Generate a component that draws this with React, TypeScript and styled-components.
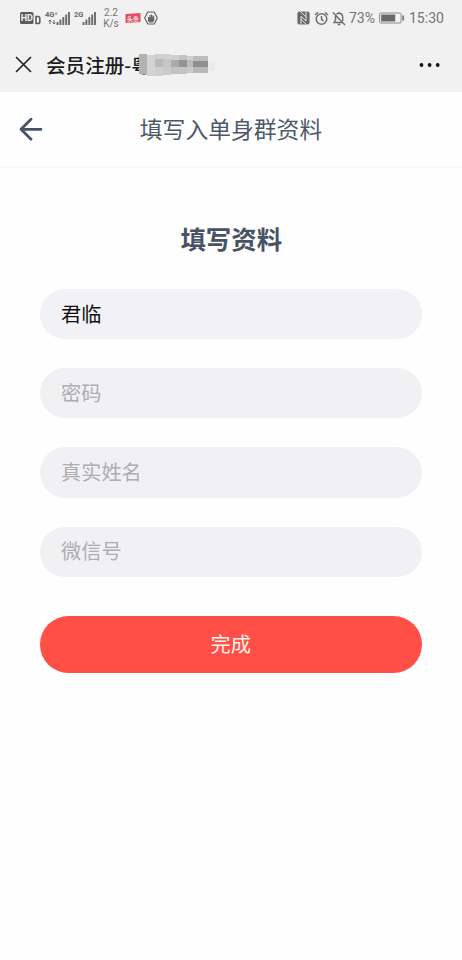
import React from 'react';
import styled, { createGlobalStyle } from 'styled-components';

const GlobalStyle = createGlobalStyle`
  * { box-sizing: border-box; }
  html, body { margin: 0; padding: 0; background: #fefefe; }
  body, input, button { font-family: "Noto Sans CJK SC", sans-serif; }
`;

const Page = styled.main`
  width: 462px;
  height: 960px;
  overflow: hidden;
  display: flex;
  flex-direction: column;
  background: #fefefe;
`;

const StatusBar = styled.div`
  height: 36px;
  flex: none;
  display: flex;
  align-items: center;
  justify-content: space-between;
  padding: 0 18px 0 20px;
  background: #f1f1f1;
  color: #747474;
  font-family: Roboto, sans-serif;
`;

const StatusGroup = styled.div`
  display: flex;
  align-items: center;
  height: 36px;
`;

const Icon = styled.svg<{ $gap?: number }>`
  display: block;
  flex: none;
  margin-left: ${(p) => p.$gap ?? 0}px;
`;

const Speed = styled.div`
  width: 16px;
  margin-left: 7px;
  font-size: 10px;
  line-height: 11px;
  text-align: center;
  white-space: nowrap;
`;

const StatusText = styled.span<{ $gap: number; $width: number }>`
  margin-left: ${(p) => p.$gap}px;
  width: ${(p) => p.$width}px;
  font-size: 14px;
  line-height: 20px;
  white-space: nowrap;
`;

const BrowserBar = styled.header`
  height: 56px;
  flex: none;
  display: flex;
  align-items: center;
  padding: 1px 21px 0 15px;
  background: #f1f1f1;
`;

const BrowserTitle = styled.div`
  display: flex;
  align-items: center;
  flex: 1;
  margin-left: 14px;
  padding-top: 1px;
  font-size: 19.6px;
  font-weight: 500;
  line-height: 28px;
  color: #1c1c1c;
  white-space: nowrap;
`;

const NavBar = styled.nav`
  height: 76px;
  flex: none;
  display: grid;
  grid-template-columns: 60px 1fr 60px;
  align-items: center;
  border-bottom: 2px solid #f6f6f7;
`;

const BackButton = styled.button`
  display: flex;
  padding: 0 0 0 18px;
  border: 0;
  background: none;
`;

const NavTitle = styled.h1`
  margin: 0;
  font-size: 22.8px;
  font-weight: 400;
  line-height: 34px;
  text-align: center;
  color: #4c5868;
`;

const Form = styled.form`
  display: flex;
  flex-direction: column;
  padding: 51px 40.5px 0 40px;
`;

const FormTitle = styled.h2`
  margin: 0 0 32px;
  padding-left: 1px;
  font-size: 25.4px;
  font-weight: 700;
  line-height: 38px;
  text-align: center;
  color: #475365;
`;

const Fields = styled.div`
  display: flex;
  flex-direction: column;
  gap: 29px;
`;

const Field = styled.input<{ $filled?: boolean }>`
  width: 100%;
  height: 50.2px;
  padding: 0 21px ${(p) => (p.$filled ? 1 : 2)}px;
  border: 0;
  border-radius: 26px;
  outline: 0;
  background: ${(p) => (p.$filled ? '#f1f1f6' : '#f1f1f4')};
  font-size: 20.2px;
  color: #111;
  &::placeholder { color: #adadb2; opacity: 1; }
`;

const Submit = styled.button`
  height: 56.5px;
  margin-top: 39.5px;
  padding: 0 0 2px;
  border: 0;
  border-radius: 29px;
  background: #ff4f47;
  color: #fff3e9;
  font-size: 20.2px;
`;

const HdIcon = () => (
  <Icon width="21" height="14" viewBox="0 0 21 14">
    <rect x="0" y="1" width="13.5" height="12" rx="1.5" fill="#5c5c5c" />
    <text x="6.8" y="10.3" textAnchor="middle" fontSize="9" fontWeight="700" fill="#f1f1f1">HD</text>
    <path d="M16 5.500h2q1.800 0 1.800 1.800v3.400q0 1.800-1.800 1.800h-2Z" fill="none" stroke="#5c5c5c" strokeWidth="1.600" />
  </Icon>
);

const Signal = ({ label, gap, arrows }: { label: string; gap: number; arrows?: boolean }) => (
  <Icon $gap={gap} width={arrows ? 25 : 22} height="16" viewBox={arrows ? '0 0 25 16' : '3 0 22 16'}>
    <text x={arrows ? 0 : 3} y="7" fontSize="7.5" fontWeight="700" fill="#6a6a6a">{label}</text>
    {arrows && <path d="M5 10v4M3.500 11.500 5 10l1.500 1.500M9 10v4M7.500 12.500 9 14l1.500-1.500" stroke="#6a6a6a" fill="none" />}
    <path d="M12.500 12v3M15.400 9.500v5.500M18.300 7v8M21.200 4.500v10.500M24 2v13" stroke="#6a6a6a" strokeWidth="1.900" />
  </Icon>
);

const NewsIcon = () => (
  <Icon $gap={6} width="16" height="12" viewBox="0 0 16 12">
    <path d="M.5 2 15.500 1v9L.5 11Z" fill="#e14e5a" />
    <text x="8" y="8.500" textAnchor="middle" fontSize="6" fontWeight="700" fill="#f9dfe1" fontFamily="Noto Sans CJK SC">头条</text>
  </Icon>
);

const HandIcon = () => (
  <Icon $gap={3} width="14" height="14" viewBox="0 0 14 14">
    <path d="M3.700 1h6.600L13.300 7l-3 6H3.700L.7 7Z" fill="none" stroke="#666" strokeWidth="1.200" strokeLinejoin="round" />
    <path d="M4.500 6V9q0 2 2.500 2t2.700-2V5.500M6 7V4M7.500 7V3.500M9 7V4.500" stroke="#666" strokeWidth="1.200" fill="none" />
    <path d="M4.500 6.500h5V10L7 11 4.700 9.500Z" fill="#666" />
  </Icon>
);

const NfcIcon = () => (
  <Icon width="13" height="14" viewBox="0 0 13 14">
    <rect x=".4" y=".4" width="12.200" height="13.200" rx="2" fill="#696969" />
    <path d="M4 13.500V5.200L9 10V.5M3.300.5 9 5.800M4 8.500l5.500 5" fill="none" stroke="#f1f1f1" strokeWidth=".9" />
  </Icon>
);

const AlarmIcon = () => (
  <Icon $gap={4} width="15" height="15" viewBox="0 0 15 15" fill="none" stroke="#6c6c6c" strokeWidth="1.500">
    <circle cx="7.500" cy="8" r="5.300" />
    <path d="M7.500 5v3.300l2 1.500M1 4l3-2.700M14 4l-3-2.700" />
  </Icon>
);

const MutedIcon = () => (
  <Icon $gap={3} width="14" height="15" viewBox="0 0 14 15" fill="none" stroke="#6c6c6c" strokeWidth="1.400">
    <path d="M4.500 3.200Q5.500 2.300 7 2.300q3.700 0 3.700 4V10M3.500 5v4L2 11.500h9M7 2.300V1M5.700 13.500h2.600M1 1.500l12 12.500" />
  </Icon>
);

const BatteryIcon = () => (
  <Icon $gap={3} width="26" height="12" viewBox="0 0 26 12">
    <rect x=".6" y="1" width="21.500" height="10" rx="1.200" fill="none" stroke="#8a8a8a" />
    <rect x="2.200" y="2.500" width="14" height="7" fill="#686868" />
    <path d="M24.200 3.500v5" stroke="#777" strokeWidth="1.800" />
  </Icon>
);

const mosaic: [number, number, number, number, string][] = [
  [6, 3, 8, 20, '#b2b2b2'], [14, 4, 8, 21, '#d3d3d3'], [22, 3, 8, 5, '#d0d0d0'],
  [22, 8, 8, 8, '#b9b9b9'], [22, 16, 8, 9, '#cfcfcf'], [30, 3, 8, 5, '#d2d2d2'],
  [30, 8, 8, 8, '#c6c6c6'], [30, 16, 8, 8, '#cacaca'], [38, 4, 8, 5, '#cfcfcf'],
  [38, 9, 8, 7, '#aaaaaa'], [38, 16, 8, 7, '#c2c2c2'], [46, 4, 8, 5, '#c4c4c4'],
  [46, 9, 8, 7, '#939393'], [46, 16, 8, 7, '#c4c4c4'], [54, 5, 6, 4, '#d0d0d0'],
  [54, 9, 6, 7, '#bdbdbd'], [54, 16, 6, 6, '#cacaca'], [60, 5, 15, 5, '#bdbdbd'],
  [60, 10, 15, 6, '#8f8f8f'], [60, 16, 15, 6, '#b8b8b8'], [75, 10, 7, 10, '#ebebeb'],
];

const MaskedName = styled(Icon)`
  margin-left: -18px;
`;

export default function App() {
  return (
    <>
      <GlobalStyle />
      <Page>
        <StatusBar>
          <StatusGroup>
            <HdIcon />
            <Signal label="4G⁺" gap={4} arrows />
            <Signal label="2G" gap={4} />
            <Speed>2.2<br />K/s</Speed>
            <NewsIcon />
            <HandIcon />
          </StatusGroup>
          <StatusGroup>
            <NfcIcon />
            <AlarmIcon />
            <MutedIcon />
            <StatusText $gap={3} $width={27}>73%</StatusText>
            <BatteryIcon />
            <StatusText $gap={4} $width={35}>15:30</StatusText>
          </StatusGroup>
        </StatusBar>
        <BrowserBar>
          <Icon width="17" height="17" viewBox="0 0 17 17">
            <path d="m1 1 15 15M16 1 1 16" stroke="#202020" strokeWidth="1.600" />
          </Icon>
          <BrowserTitle>
            会员注册-粤
            <MaskedName width="90" height="28" viewBox="0 0 90 28" shapeRendering="crispEdges">
              {mosaic.map(([x, y, w, h, fill]) => (
                <rect key={`${x}-${y}`} x={x} y={y} width={w} height={h} fill={fill} />
              ))}
            </MaskedName>
          </BrowserTitle>
          <Icon width="22" height="6" viewBox="0 0 22 6" fill="#111">
            <circle cx="2.500" cy="3" r="1.900" />
            <circle cx="10.600" cy="3" r="1.900" />
            <circle cx="18.700" cy="3" r="1.900" />
          </Icon>
        </BrowserBar>
        <NavBar>
          <BackButton type="button" aria-label="返回">
            <Icon width="25" height="24" viewBox="0 0 25 24">
              <path d="M23 12.300H3M13 2.300l-10 10 10 10" fill="none" stroke="#465364" strokeWidth="2.700" strokeLinecap="round" strokeLinejoin="round" />
            </Icon>
          </BackButton>
          <NavTitle>填写入单身群资料</NavTitle>
        </NavBar>
        <Form>
          <FormTitle>填写资料</FormTitle>
          <Fields>
            <Field $filled defaultValue="君临" />
            <Field type="password" placeholder="密码" />
            <Field placeholder="真实姓名" />
            <Field placeholder="微信号" />
          </Fields>
          <Submit type="button">完成</Submit>
        </Form>
      </Page>
    </>
  );
}
